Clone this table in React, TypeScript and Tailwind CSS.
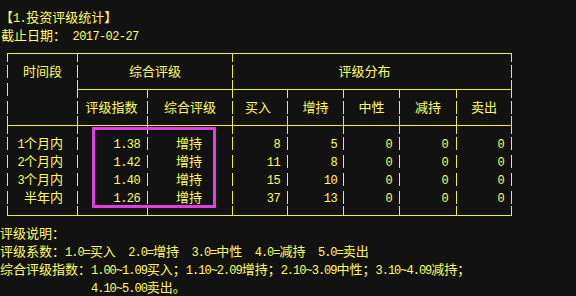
import React from "react";

const LINE = "bg-[#eeee44]";

function T({ s, tight }: { s: string; tight?: boolean }) {
  const parts: { a: boolean; t: string }[] = [];
  for (const ch of s) {
    const a = ch.charCodeAt(0) < 0x2000;
    const last = parts[parts.length - 1];
    if (last && last.a === a) last.t += ch;
    else parts.push({ a, t: ch });
  }
  return (
    <>
      {parts.map((p, i) =>
        p.a ? (
          <span
            key={i}
            className={
              tight
                ? "font-['Liberation_Mono',monospace] text-[12px] tracking-[-1px]"
                : "font-['Liberation_Mono',monospace] text-[12px] tracking-[-0.6px]"
            }
          >
            {p.t}
          </span>
        ) : (
          <span key={i}>{p.t}</span>
        )
      )}
    </>
  );
}

/* vertical dash in a content row */
function D() {
  return (
    <div className="w-px h-[18px] flex flex-col">
      <div className="h-[3px]" />
      <div className={"h-[13px] " + LINE} />
    </div>
  );
}

/* junction in a line row */
function J({ up, down }: { up?: boolean; down?: boolean }) {
  return (
    <div className="w-px h-[18px] flex flex-col">
      <div className={up ? "h-[9px] " + LINE : "h-[9px]"} />
      <div className={"h-px " + LINE} />
      <div className={down ? "h-[8px] " + LINE : "h-[8px]"} />
    </div>
  );
}

/* horizontal segment */
function H({ w }: { w: string }) {
  return (
    <div className={w + " h-[18px] pt-[9px]"}>
      <div className={"h-px " + LINE} />
    </div>
  );
}

const W = ["w-[69px]", "w-[69px]", "w-[84px]", "w-[54px]", "w-[55px]", "w-[55px]", "w-[56px]", "w-[54px]"];

function LineRow({ junctions }: { junctions: string[] }) {
  const items: React.ReactNode[] = [];
  junctions.forEach((j, i) => {
    items.push(<J key={"j" + i} up={j.includes("u")} down={j.includes("d")} />);
    if (i < W.length) items.push(<H key={"h" + i} w={W[i]} />);
  });
  return <div className="flex h-[18px] pl-[7px]">{items}</div>;
}

const data = [
  ["1个月内", "1.38", "增持", "8", "5", "0", "0", "0"],
  ["2个月内", "1.42", "增持", "11", "8", "0", "0", "0"],
  ["3个月内", "1.40", "增持", "15", "10", "0", "0", "0"],
  ["半年内", "1.26", "增持", "37", "13", "0", "0", "0"],
];

export default function App() {
  return (
    <div className="relative w-[576px] h-[296px] overflow-hidden bg-[#121212] text-[#ffff5c] font-['Noto_Sans_CJK_SC',sans-serif] text-[13px] leading-[18px] whitespace-pre pt-[8px]">
      <div className="h-[18px]">
        <T s="【1.投资评级统计】" />
      </div>
      <div className="h-[18px] pl-[1px]">
        <T s="截止日期： 2017-02-27" />
      </div>

      {/* table */}
      <div className="flex flex-col">
        <LineRow junctions={["d", "d", "", "d", "", "", "", "", "d"]} />
        <div className="flex h-[18px] pl-[7px]">
          <D />
          <div className="w-[69px] text-center">时间段</div>
          <D />
          <div className="w-[154px] text-center">综合评级</div>
          <D />
          <div className="w-[278px] text-center pr-[15px]">评级分布</div>
          <D />
        </div>
        <div className="flex h-[18px] pl-[7px]">
          <D />
          <div className="w-[69px]" />
          <J up down />
          <H w="w-[69px]" />
          <J down />
          <H w="w-[84px]" />
          <J up down />
          <H w="w-[54px]" />
          <J down />
          <H w="w-[55px]" />
          <J down />
          <H w="w-[55px]" />
          <J down />
          <H w="w-[56px]" />
          <J down />
          <H w="w-[54px]" />
          <J up down />
        </div>
        <div className="flex h-[18px] pl-[7px]">
          <D />
          <div className="w-[69px]" />
          <D />
          <div className="w-[69px] text-center pr-[2px]">评级指数</div>
          <D />
          <div className="w-[84px] text-center">综合评级</div>
          <D />
          <div className="w-[54px] text-center pr-[4px]">买入</div>
          <D />
          <div className="w-[55px] text-center">增持</div>
          <D />
          <div className="w-[55px] text-center">中性</div>
          <D />
          <div className="w-[56px] text-center">减持</div>
          <D />
          <div className="w-[54px] text-center">卖出</div>
          <D />
        </div>
        <LineRow junctions={["ud", "ud", "ud", "ud", "ud", "ud", "ud", "ud", "ud"]} />
        {data.map((r, i) => (
          <div key={i} className="flex h-[18px] pl-[7px]">
            <D />
            <div className="w-[69px] text-right pr-[14px]">
              <T s={r[0]} />
            </div>
            <D />
            <div className="w-[69px] text-right pr-[7px]">
              <T s={r[1]} />
            </div>
            <D />
            <div className="w-[84px] text-center pr-[2px]">{r[2]}</div>
            <D />
            <div className="w-[54px] text-right pr-[7px]">
              <T s={r[3]} />
            </div>
            <D />
            <div className="w-[55px] text-right pr-[6px]">
              <T s={r[4]} />
            </div>
            <D />
            <div className="w-[55px] text-right pr-[7px]">
              <T s={r[5]} />
            </div>
            <D />
            <div className="w-[56px] text-right pr-[8px]">
              <T s={r[6]} />
            </div>
            <D />
            <div className="w-[54px] text-right pr-[7px]">
              <T s={r[7]} />
            </div>
            <D />
          </div>
        ))}
        <LineRow junctions={["u", "u", "u", "u", "u", "u", "u", "u", "u"]} />
      </div>

      {/* notes */}
      <div className="h-[18px]">
        <T s="评级说明：" />
      </div>
      <div className="h-[18px]">
        <T tight s="评级系数：1.0=买入  2.0=增持  3.0=中性  4.0=减持  5.0=卖出" />
      </div>
      <div className="flex">
        <div>
          <T s="综合评级指数：" />
        </div>
        <div className="flex flex-col">
          <div className="h-[18px]">
            <T tight s="1.00~1.09买入；1.10~2.09增持；2.10~3.09中性；3.10~4.09减持；" />
          </div>
          <div className="h-[18px]">
            <T tight s="4.10~5.00卖出。" />
          </div>
        </div>
      </div>

      {/* highlight box */}
      <div className="absolute left-[92px] top-[127px] w-[124px] h-[81px] border-[3px] border-[#e040e0]" />
    </div>
  );
}
